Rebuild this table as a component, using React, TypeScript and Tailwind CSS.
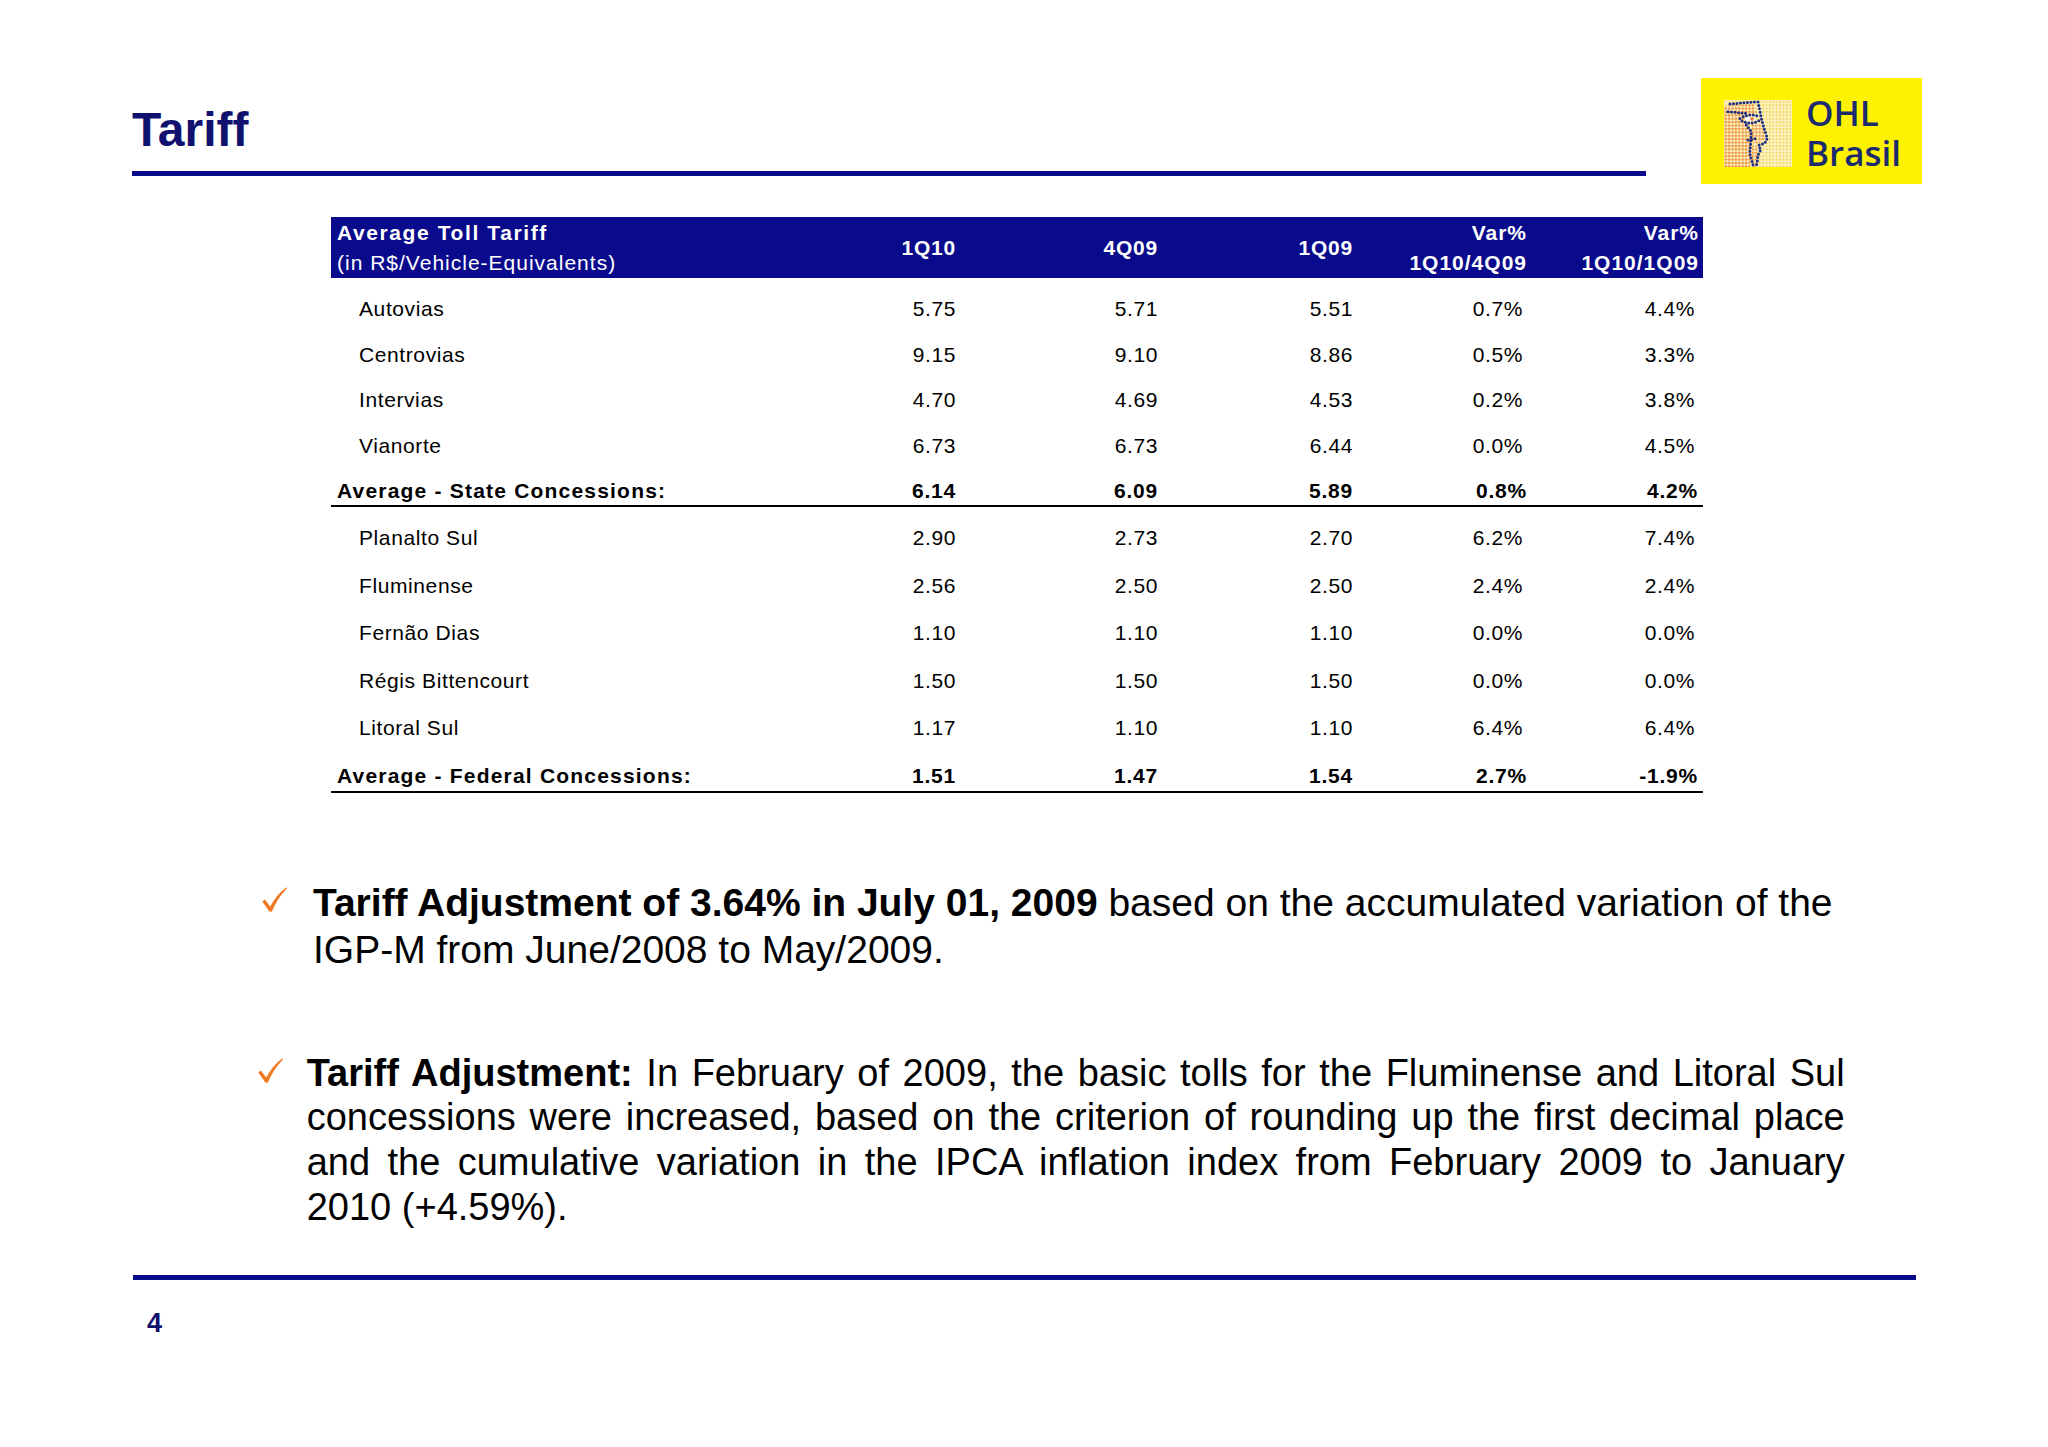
import React from "react";

const GRID = "grid grid-cols-[430px_200px_202px_195px_174px_171px]";

const stateRows = [
  ["Autovias", "5.75", "5.71", "5.51", "0.7%", "4.4%"],
  ["Centrovias", "9.15", "9.10", "8.86", "0.5%", "3.3%"],
  ["Intervias", "4.70", "4.69", "4.53", "0.2%", "3.8%"],
  ["Vianorte", "6.73", "6.73", "6.44", "0.0%", "4.5%"],
];
const stateAvg = ["Average - State Concessions:", "6.14", "6.09", "5.89", "0.8%", "4.2%"];
const fedRows = [
  ["Planalto Sul", "2.90", "2.73", "2.70", "6.2%", "7.4%"],
  ["Fluminense", "2.56", "2.50", "2.50", "2.4%", "2.4%"],
  ["Fernão Dias", "1.10", "1.10", "1.10", "0.0%", "0.0%"],
  ["Régis Bittencourt", "1.50", "1.50", "1.50", "0.0%", "0.0%"],
  ["Litoral Sul", "1.17", "1.10", "1.10", "6.4%", "6.4%"],
];
const fedAvg = ["Average - Federal Concessions:", "1.51", "1.47", "1.54", "2.7%", "-1.9%"];

function Check({ className }: { className?: string }) {
  return (
    <svg className={className} width="25" height="25" viewBox="0 0 25 25">
      <path
        d="M0.3,14.6 L2.9,12.6 L8.2,19.6 C12,12.2 17.4,5.2 24.7,0.2 L25,1.6 C19.4,7.2 13.8,15.2 10,24.5 L7.5,24.8 Z"
        fill="#f07a22"
      />
    </svg>
  );
}

function Face() {
  return (
    <svg className="ml-[23px] mt-[22px] shrink-0" width="68" height="67" viewBox="0 0 68 67">
      <defs>
        <pattern id="dotsO" width="3.4" height="3.4" patternUnits="userSpaceOnUse">
          <circle cx="1.7" cy="1.7" r="1.35" fill="#ec7f3c" />
        </pattern>
        <pattern id="dotsY" width="3.4" height="3.4" patternUnits="userSpaceOnUse">
          <circle cx="1.7" cy="1.7" r="1.3" fill="#f3d96a" />
        </pattern>
      </defs>
      <rect width="68" height="67" fill="#fdf6cf" />
      <rect width="68" height="67" fill="url(#dotsY)" />
      <polygon points="0,6 30,4 33,14 20,15 24,26 28,34 26,67 0,67" fill="url(#dotsO)" opacity="0.8" />
      <polygon points="27,25 37,24 42,38 34,44 28,42" fill="url(#dotsO)" opacity="0.7" />
      <polygon points="27,46 34,46 34,56 32,67 28,67" fill="url(#dotsO)" opacity="0.7" />
      <g
        fill="none"
        stroke="#1d2d86"
        strokeWidth="3"
        strokeLinecap="round"
        strokeDasharray="0 3.5"
      >
        <polyline points="6,4 33,1.7" />
        <polyline points="34,2 35.7,10 37.3,18.3 40,28.3 43.3,38.3 40.7,43.3 34.7,45 36.7,50 34,55 33.3,61.7 32.3,66" />
        <polyline points="4,11.7 22,13.3" />
        <path d="M16,18.5 Q26,12.5 35,16.5" />
        <path d="M18,21 Q27,25.5 35,20.5" />
        <polyline points="22.3,25 27.3,31.7 26.7,43.3 25.7,53.3 29,65" />
        <polyline points="24,40 34,38.3" />
      </g>
      <ellipse cx="26" cy="19" rx="5" ry="2" fill="#ffffff" />
      <circle cx="28" cy="19" r="1.8" fill="#e8702a" />
    </svg>
  );
}

function DataRow({ r, fed }: { r: string[]; fed?: boolean }) {
  return (
    <div
      className={`${GRID} ${fed ? "h-[47.5px] leading-[47.5px]" : "h-[45.5px] leading-[45.5px]"} text-[21px] tracking-[0.6px] whitespace-nowrap`}
    >
      <div className="pl-[28px]">{r[0]}</div>
      <div className="text-right pr-[5px]">{r[1]}</div>
      <div className="text-right pr-[5px]">{r[2]}</div>
      <div className="text-right pr-[5px]">{r[3]}</div>
      <div className="text-right pr-[9px]">{r[4]}</div>
      <div className="text-right pr-[8px]">{r[5]}</div>
    </div>
  );
}

function AvgRow({ r, fed }: { r: string[]; fed?: boolean }) {
  return (
    <div
      className={`${GRID} ${fed ? "h-[41.5px] pb-[5px]" : "h-[39px] pb-[4px]"} items-end leading-[21px] border-b-2 border-black font-bold text-[21px] whitespace-nowrap`}
    >
      <div className="pl-[6px] tracking-[1.2px]">{r[0]}</div>
      <div className="text-right pr-[5px] tracking-[0.8px]">{r[1]}</div>
      <div className="text-right pr-[5px] tracking-[0.8px]">{r[2]}</div>
      <div className="text-right pr-[5px] tracking-[0.8px]">{r[3]}</div>
      <div className="text-right pr-[5px] tracking-[0.8px]">{r[4]}</div>
      <div className="text-right pr-[5px] tracking-[0.8px]">{r[5]}</div>
    </div>
  );
}

export default function App() {
  return (
    <div className="w-[2048px] h-[1447px] bg-white text-black overflow-hidden [font-family:'Liberation_Sans',Arial,sans-serif]">
      {/* Header */}
      <div className="flex items-start pt-[78px]">
        <div className="ml-[132px] w-[1514px] pt-[28px] shrink-0">
          <div className="text-[48px] leading-[47px] font-bold text-[#10106e]">Tariff</div>
          <div className="mt-[18px] h-[5px] bg-[#0c0c8a]" />
        </div>
        <div className="ml-[55px] w-[221px] h-[106px] bg-[#fff200] flex items-start shrink-0">
          <Face />
          <div className="ml-[14px] mt-[14.5px] text-[35px] font-semibold text-[#1c2b6e] [font-family:'Open_Sans',sans-serif]">
            <div className="leading-[40px] h-[40px]">OHL</div>
            <div className="leading-[40px] h-[40px]">Brasil</div>
          </div>
        </div>
      </div>

      {/* Table */}
      <div className="ml-[331px] mt-[33px] w-[1372px]">
        <div className={`${GRID} h-[61px] bg-[#0a0a8c] text-white text-[21px] leading-[30px] items-center whitespace-nowrap`}>
          <div className="pl-[6px]">
            <div className="font-bold tracking-[1.6px]">Average Toll Tariff</div>
            <div className="tracking-[1px]">(in R$/Vehicle-Equivalents)</div>
          </div>
          <div className="text-right pr-[5px] font-bold tracking-[0.8px]">1Q10</div>
          <div className="text-right pr-[5px] font-bold tracking-[0.8px]">4Q09</div>
          <div className="text-right pr-[5px] font-bold tracking-[0.8px]">1Q09</div>
          <div className="text-right pr-[5px] font-bold tracking-[1px]">
            <div>Var%</div>
            <div>1Q10/4Q09</div>
          </div>
          <div className="text-right pr-[4px] font-bold tracking-[1px]">
            <div>Var%</div>
            <div>1Q10/1Q09</div>
          </div>
        </div>
        <div className="mt-[8px]">
          {stateRows.map((r) => (
            <DataRow key={r[0]} r={r} />
          ))}
        </div>
        <AvgRow r={stateAvg} />
        <div className="mt-[7px]">
          {fedRows.map((r) => (
            <DataRow key={r[0]} r={r} fed />
          ))}
        </div>
        <AvgRow r={fedAvg} fed />
      </div>

      {/* Bullet 1 */}
      <div className="flex items-start mt-[86.8px]">
        <Check className="ml-[262px] mt-[7px] shrink-0" />
        <div className="ml-[26px] w-[1580px] text-[39px] leading-[46.7px] whitespace-nowrap">
          <div>
            <span className="font-bold">Tariff Adjustment of 3.64% in July 01, 2009</span> based on the
            accumulated variation of the
          </div>
          <div>IGP-M from June/2008 to May/2009.</div>
        </div>
      </div>

      {/* Bullet 2 */}
      <div className="flex items-start mt-[77.5px]">
        <Check className="ml-[258px] mt-[7.5px] shrink-0" />
        <div className="ml-[23.7px] w-[1538px] text-[38px] leading-[44.7px]">
          <div className="text-justify [text-align-last:justify]">
            <span className="font-bold">Tariff Adjustment:</span> In February of 2009, the basic tolls for the
            Fluminense and Litoral Sul
          </div>
          <div className="text-justify [text-align-last:justify]">
            concessions were increased, based on the criterion of rounding up the first decimal place
          </div>
          <div className="text-justify [text-align-last:justify]">
            and the cumulative variation in the IPCA inflation index from February 2009 to January
          </div>
          <div>2010 (+4.59%).</div>
        </div>
      </div>

      {/* Footer */}
      <div className="ml-[133px] mt-[45.5px] w-[1783px] h-[5px] bg-[#0c0c8a]" />
      <div className="ml-[147px] mt-[30px] text-[27px] leading-[27px] font-bold text-[#10106e]">4</div>
    </div>
  );
}
